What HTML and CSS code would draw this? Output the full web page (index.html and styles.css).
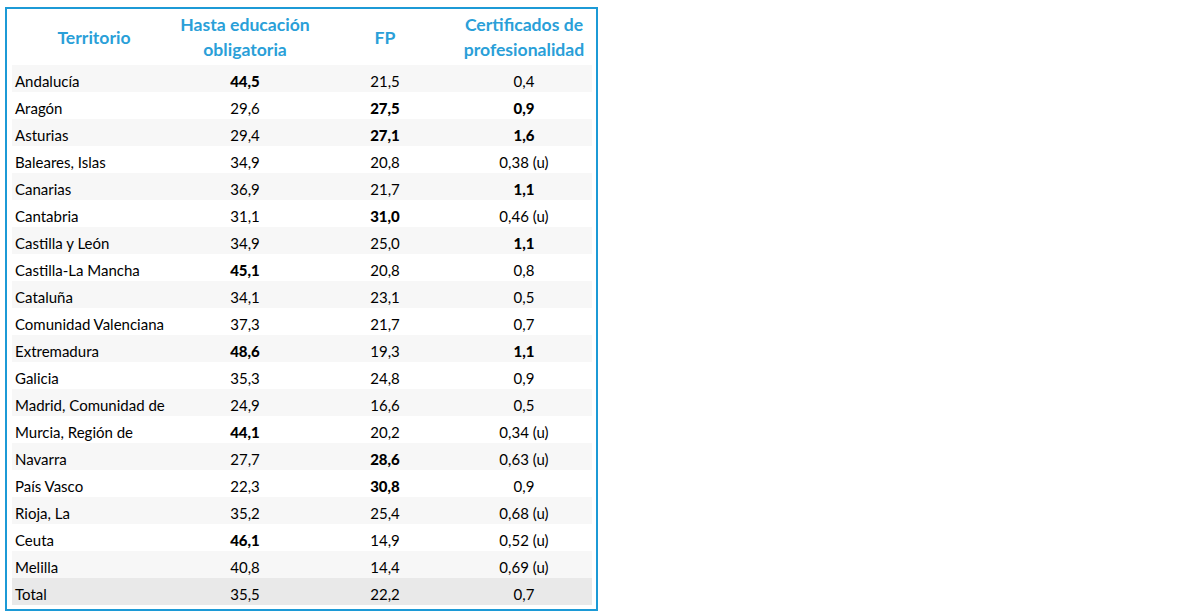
FILE: index.html
```html
<!DOCTYPE html>
<html lang="es">
<head>
<meta charset="utf-8">
<title>Tabla</title>
<link rel="stylesheet" href="styles.css">
</head>
<body>
<div class="frame">
<table class="data">
<colgroup><col class="c1"><col class="c2"><col class="c3"><col class="c4"></colgroup>
<thead>
<tr><th>Territorio</th><th>Hasta educación<br>obligatoria</th><th>FP</th><th>Certificados de<br>profesionalidad</th></tr>
</thead>
<tbody>
<tr><td>Andalucía</td><td><b>44,5</b></td><td>21,5</td><td>0,4</td></tr>
<tr><td>Aragón</td><td>29,6</td><td><b>27,5</b></td><td><b>0,9</b></td></tr>
<tr><td>Asturias</td><td>29,4</td><td><b>27,1</b></td><td><b>1,6</b></td></tr>
<tr><td>Baleares, Islas</td><td>34,9</td><td>20,8</td><td>0,38 (u)</td></tr>
<tr><td>Canarias</td><td>36,9</td><td>21,7</td><td><b>1,1</b></td></tr>
<tr><td>Cantabria</td><td>31,1</td><td><b>31,0</b></td><td>0,46 (u)</td></tr>
<tr><td>Castilla y León</td><td>34,9</td><td>25,0</td><td><b>1,1</b></td></tr>
<tr><td>Castilla-La Mancha</td><td><b>45,1</b></td><td>20,8</td><td>0,8</td></tr>
<tr><td>Cataluña</td><td>34,1</td><td>23,1</td><td>0,5</td></tr>
<tr><td>Comunidad Valenciana</td><td>37,3</td><td>21,7</td><td>0,7</td></tr>
<tr><td>Extremadura</td><td><b>48,6</b></td><td>19,3</td><td><b>1,1</b></td></tr>
<tr><td>Galicia</td><td>35,3</td><td>24,8</td><td>0,9</td></tr>
<tr><td>Madrid, Comunidad de</td><td>24,9</td><td>16,6</td><td>0,5</td></tr>
<tr><td>Murcia, Región de</td><td><b>44,1</b></td><td>20,2</td><td>0,34 (u)</td></tr>
<tr><td>Navarra</td><td>27,7</td><td><b>28,6</b></td><td>0,63 (u)</td></tr>
<tr><td>País Vasco</td><td>22,3</td><td><b>30,8</b></td><td>0,9</td></tr>
<tr><td>Rioja, La</td><td>35,2</td><td>25,4</td><td>0,68 (u)</td></tr>
<tr><td>Ceuta</td><td><b>46,1</b></td><td>14,9</td><td>0,52 (u)</td></tr>
<tr><td>Melilla</td><td>40,8</td><td>14,4</td><td>0,69 (u)</td></tr>
<tr class="total"><td>Total</td><td>35,5</td><td>22,2</td><td>0,7</td></tr>
</tbody>
</table>
</div>
</body>
</html>
```
FILE: styles.css
```css
html, body {
  margin: 0;
  padding: 0;
  background: #ffffff;
}
body {
  font-family: Lato, "Open Sans", "Liberation Sans", sans-serif;
  color: #000000;
}
.frame {
  box-sizing: border-box;
  width: 593px;
  height: 604px;
  margin: 7px 0 0 5px;
  border: 2px solid #1c9ad6;
  padding: 0 4px 4px 5px;
}
.data {
  width: 580px;
  border-collapse: collapse;
  table-layout: fixed;
}
.c1 { width: 164px; }
.c2 { width: 138px; }
.c3 { width: 142px; }
.c4 { width: 136px; }
.data th {
  height: 56px;
  padding: 0;
  font-size: 17.6px;
  line-height: 25px;
  font-weight: 700;
  color: #2a9fd8;
  text-align: center;
  vertical-align: middle;
}
.data td {
  height: 21px;
  padding: 6px 0 0 0;
  font-size: 15px;
  line-height: 21px;
  text-align: center;
  white-space: nowrap;
}
.data td:first-child {
  text-align: left;
  padding-left: 3px;
}
.data tbody tr:nth-child(odd) td { background: #f7f7f7; }
.data tbody tr.total td { background: #e9e9e9; }
.data b { font-weight: 900; }
```
